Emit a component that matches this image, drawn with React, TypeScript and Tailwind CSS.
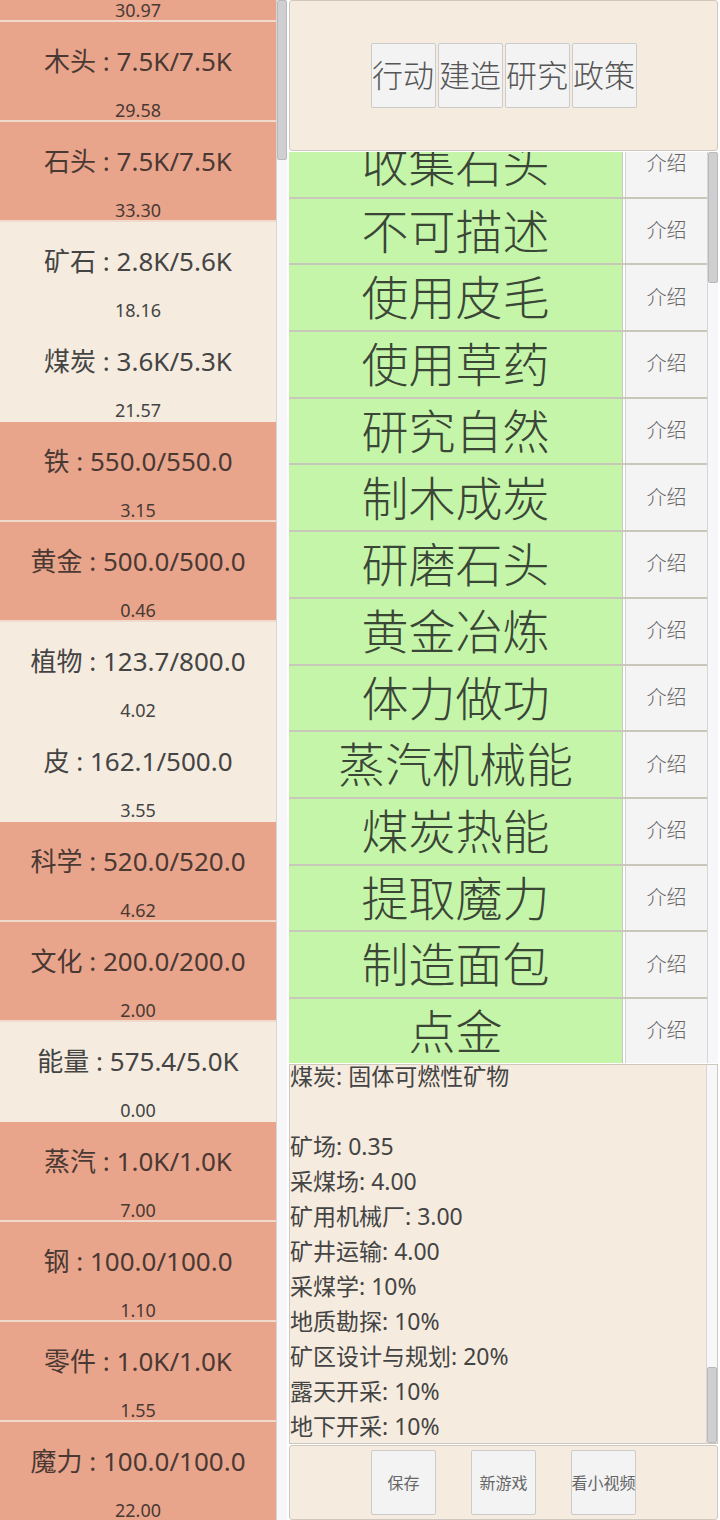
import React from 'react';

const FONT = "font-['Noto_Sans','Noto_Sans_CJK_SC',sans-serif]";

interface Resource {
  label: string;
  rate: string;
  full: boolean;
}

const RESOURCES: Resource[] = [
  { label: '食物 : 7.5K/7.5K', rate: '30.97', full: true },
  { label: '木头 : 7.5K/7.5K', rate: '29.58', full: true },
  { label: '石头 : 7.5K/7.5K', rate: '33.30', full: true },
  { label: '矿石 : 2.8K/5.6K', rate: '18.16', full: false },
  { label: '煤炭 : 3.6K/5.3K', rate: '21.57', full: false },
  { label: '铁 : 550.0/550.0', rate: '3.15', full: true },
  { label: '黄金 : 500.0/500.0', rate: '0.46', full: true },
  { label: '植物 : 123.7/800.0', rate: '4.02', full: false },
  { label: '皮 : 162.1/500.0', rate: '3.55', full: false },
  { label: '科学 : 520.0/520.0', rate: '4.62', full: true },
  { label: '文化 : 200.0/200.0', rate: '2.00', full: true },
  { label: '能量 : 575.4/5.0K', rate: '0.00', full: false },
  { label: '蒸汽 : 1.0K/1.0K', rate: '7.00', full: true },
  { label: '钢 : 100.0/100.0', rate: '1.10', full: true },
  { label: '零件 : 1.0K/1.0K', rate: '1.55', full: true },
  { label: '魔力 : 100.0/100.0', rate: '22.00', full: true },
];

const ACTIONS = [
  '收集石头', '不可描述', '使用皮毛', '使用草药', '研究自然', '制木成炭', '研磨石头',
  '黄金冶炼', '体力做功', '蒸汽机械能', '煤炭热能', '提取魔力', '制造面包', '点金',
];

const INFO = [
  '煤炭: 固体可燃性矿物',
  '',
  '矿场: 0.35',
  '采煤场: 4.00',
  '矿用机械厂: 3.00',
  '矿井运输: 4.00',
  '采煤学: 10%',
  '地质勘探: 10%',
  '矿区设计与规划: 20%',
  '露天开采: 10%',
  '地下开采: 10%',
];

const TABS = ['行动', '建造', '研究', '政策'];

// fake scrollbar, thumb placed by flow with spacers
const ScrollBar: React.FC<{ before: number; thumb: number }> = ({ before, thumb }) => (
  <div className="flex w-[11px] shrink-0 flex-col border-l border-[#d6d6d6] bg-[#f7f7f9]">
    <div style={{ height: before }} />
    <div
      className="shrink-0 rounded-[2px] border border-[#b9b9b9] bg-[#cfcfd1]"
      style={{ height: thumb }}
    />
  </div>
);

const ResourceRow: React.FC<{ r: Resource }> = ({ r }) => (
  <div
    className={`flex h-[100px] shrink-0 flex-col items-center border-b-2 ${
      r.full ? 'border-[#f0dacd] bg-[#e9a58c] text-[#4a3933]' : 'border-[#f5ebdf] bg-[#f5ebdf] text-[#444]'
    }`}
  >
    <div className="mt-[21px] text-[26px] leading-[36px] whitespace-nowrap">{r.label}</div>
    <div className="mt-[21px] text-[18px] leading-[20px]">{r.rate}</div>
  </div>
);

export default function App() {
  return (
    <div className={`flex h-[1520px] w-[720px] overflow-hidden bg-white ${FONT}`}>
      {/* resources */}
      <div className="flex w-[288px] shrink-0">
        <div className="w-[276px] overflow-hidden">
          <div className="-mt-[78px] flex flex-col">
            {RESOURCES.map(r => (
              <ResourceRow key={r.label} r={r} />
            ))}
          </div>
        </div>
        <ScrollBar before={0} thumb={160} />
      </div>

      {/* right side */}
      <div className="flex w-[432px] flex-col gap-[1px] pl-[1px] pr-[2px]">
        <div className="flex h-[151px] shrink-0 items-center justify-center gap-[2px] rounded-[3px] border border-[#cfc8be] bg-[#f5ebdf]">
          {TABS.map(t => (
            <button
              key={t}
              className="flex h-[65px] w-[65px] items-center justify-center rounded-[2px] border border-[#cbcbcb] bg-[#f3f3f3] text-[31px] font-light text-[#555] whitespace-nowrap"
            >
              {t}
            </button>
          ))}
        </div>

        <div className="flex h-[911px] shrink-0">
          <div className="flex-1 overflow-hidden">
            <div className="-mt-[20px] flex flex-col">
              {ACTIONS.map(a => (
                <div key={a} className="flex h-[66.7px] shrink-0 gap-[2px] border-b-2 border-[#c9c6ba]">
                  <div className="flex w-[334px] items-center justify-center border-r border-[#c9c6ba] bg-[#c5f5a9] text-[47px] font-light text-[#3a4636] whitespace-nowrap">
                    {a}
                  </div>
                  <button className="flex flex-1 items-center justify-center border-l border-[#d3d3d3] bg-[#f4f4f4] text-[20px] font-light text-[#666]">
                    介绍
                  </button>
                </div>
              ))}
            </div>
          </div>
          <ScrollBar before={0} thumb={131} />
        </div>

        <div className="flex h-[380px] shrink-0 border border-[#cfc8be] bg-[#f5ebdf]">
          <div className="flex-1 overflow-hidden">
            <div className="-mt-[6px] flex flex-col text-[23px] leading-[35px] text-[#444]">
              {INFO.map((line, i) => (
                <div key={i} className="h-[35px] whitespace-nowrap">
                  {line}
                </div>
              ))}
            </div>
          </div>
          <ScrollBar before={302} thumb={76} />
        </div>

        <div className="flex h-[75px] shrink-0 items-center justify-center gap-[35px] rounded-[3px] border border-[#cfc8be] bg-[#f5ebdf]">
          {['保存', '新游戏', '看小视频'].map(b => (
            <button
              key={b}
              className="flex h-[65px] w-[65px] items-center justify-center rounded-[2px] border border-[#cbcbcb] bg-[#f3f3f3] text-[16px] text-[#666] whitespace-nowrap"
            >
              {b}
            </button>
          ))}
        </div>
      </div>
    </div>
  );
}
